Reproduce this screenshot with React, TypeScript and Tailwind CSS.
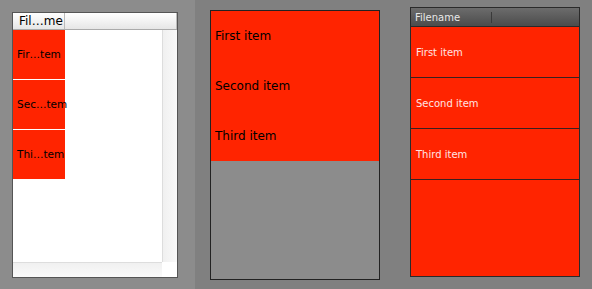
import React from 'react';

const items = ['First item', 'Second item', 'Third item'];
const elided = ['Fir…tem', 'Sec…tem', 'Thi…tem'];

export default function App() {
  return (
    <div className="flex h-[289px] w-[592px] overflow-hidden">
      {/* left: light table with elided cells */}
      <div className="w-[195px] bg-[#8c8c8c] pl-[12px] pt-[12px]">
        <div className="flex h-[266px] w-[166px] flex-col border border-[#555] bg-white font-['DejaVu_Sans',sans-serif]">
          <div className="flex h-[17px] items-center border-b border-[#aaa] bg-gradient-to-b from-white to-[#e6e6e6]">
            <div className="flex h-full w-[52px] items-center border-r border-[#bbb] pl-[6px] text-[12px] leading-none text-black">
              Fil…me
            </div>
            <div className="flex-1" />
            <div className="h-full w-px bg-[#bbb]" />
          </div>
          <div className="flex flex-1">
            <div className="flex-1">
              {elided.map((t) => (
                <div
                  key={t}
                  className="flex h-[50px] w-[52px] items-center border-b border-white bg-[#ff2400] pl-[4px] text-[10.5px] text-black"
                >
                  <span className="whitespace-nowrap">{t}</span>
                </div>
              ))}
            </div>
            <div className="w-[15px] border-l border-[#ddd] bg-gradient-to-r from-[#f0f0f0] to-[#fafafa]" />
          </div>
          <div className="flex h-[15px]">
            <div className="flex-1 border-t border-[#ddd] bg-gradient-to-b from-[#f0f0f0] to-[#fafafa]" />
            <div className="w-[15px] bg-white" />
          </div>
        </div>
      </div>

      {/* right side */}
      <div className="flex flex-1 bg-[#808080]">
        <div className="ml-[15px] mt-[10px] flex h-[270px] w-[170px] flex-col border border-[#222] bg-[#8c8c8c] font-['DejaVu_Sans',sans-serif]">
          {items.map((t) => (
            <div key={t} className="flex h-[50px] items-center bg-[#ff2400] pl-[4px] text-[12px] text-black">
              {t}
            </div>
          ))}
        </div>

        <div className="ml-[30px] mt-[7px] flex h-[270px] w-[170px] flex-col border border-[#2a2a2a] bg-[#ff2400] font-['DejaVu_Sans',sans-serif]">
          <div className="flex h-[19px] items-center border-b border-[#2a2a2a] bg-gradient-to-b from-[#6c6c6c] to-[#4c4c4c]">
            <div className="flex w-[80px] items-center pl-[4px] text-[10px] text-[#e8e8e8]">Filename</div>
            <div className="h-[11px] w-px bg-[#3a3a3a]" />
          </div>
          {items.map((t) => (
            <div
              key={t}
              className="flex h-[51px] items-center border-b border-[#3a2020] pl-[5px] text-[10px] text-[#ffe4e4]"
            >
              {t}
            </div>
          ))}
        </div>
      </div>
    </div>
  );
}
